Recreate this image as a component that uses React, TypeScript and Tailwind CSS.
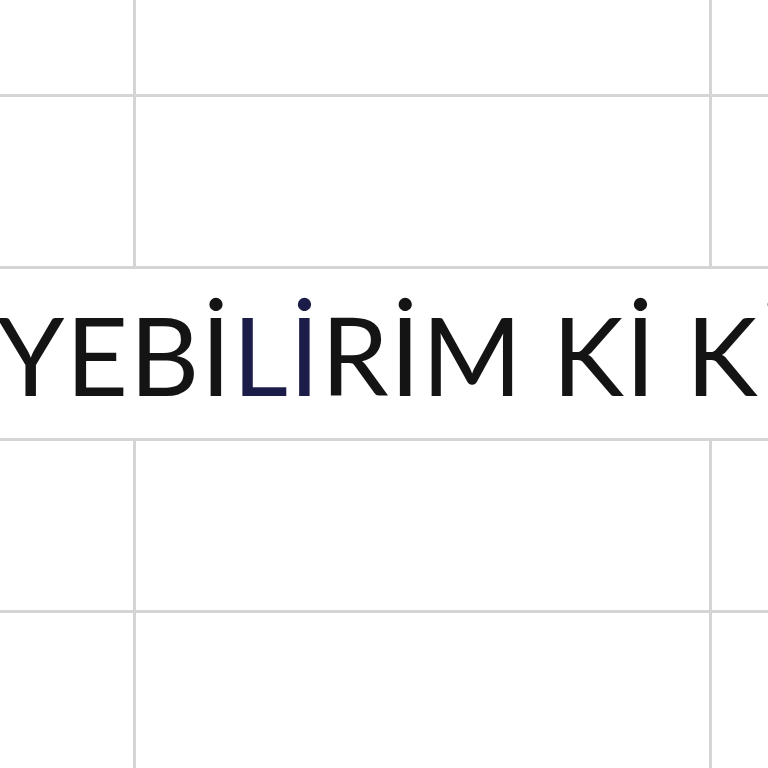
export default function App() {
  const line = "border-[#d5d5d5]";
  return (
    <div className="w-[768px] h-[768px] overflow-hidden bg-white flex flex-col">
      <div className={`flex h-[97px] shrink-0 border-b-[3px] ${line}`}>
        <div className={`w-[136px] shrink-0 border-r-[3px] ${line}`} />
        <div className={`w-[576px] shrink-0 border-r-[3px] ${line}`} />
        <div className="flex-1" />
      </div>
      <div className={`flex h-[172px] shrink-0 border-b-[3px] ${line}`}>
        <div className={`w-[136px] shrink-0 border-r-[3px] ${line}`} />
        <div className={`w-[576px] shrink-0 border-r-[3px] ${line}`} />
        <div className="flex-1" />
      </div>
      <div className={`h-[172px] shrink-0 border-b-[3px] ${line} overflow-hidden`}>
        <div
          className="pt-[31px] ml-[-3px] whitespace-nowrap text-[108px] leading-none tracking-[1.4px] text-[#141414]"
          style={{ fontFamily: "Lato, 'Noto Sans', sans-serif" }}
        >
          YEBİ<span className="text-[#1c1c48]">Lİ</span>RİM Kİ KİMSE
        </div>
      </div>
      <div className={`flex h-[172px] shrink-0 border-b-[3px] ${line}`}>
        <div className={`w-[136px] shrink-0 border-r-[3px] ${line}`} />
        <div className={`w-[576px] shrink-0 border-r-[3px] ${line}`} />
        <div className="flex-1" />
      </div>
      <div className="flex flex-1">
        <div className={`w-[136px] shrink-0 border-r-[3px] ${line}`} />
        <div className={`w-[576px] shrink-0 border-r-[3px] ${line}`} />
        <div className="flex-1" />
      </div>
    </div>
  );
}
